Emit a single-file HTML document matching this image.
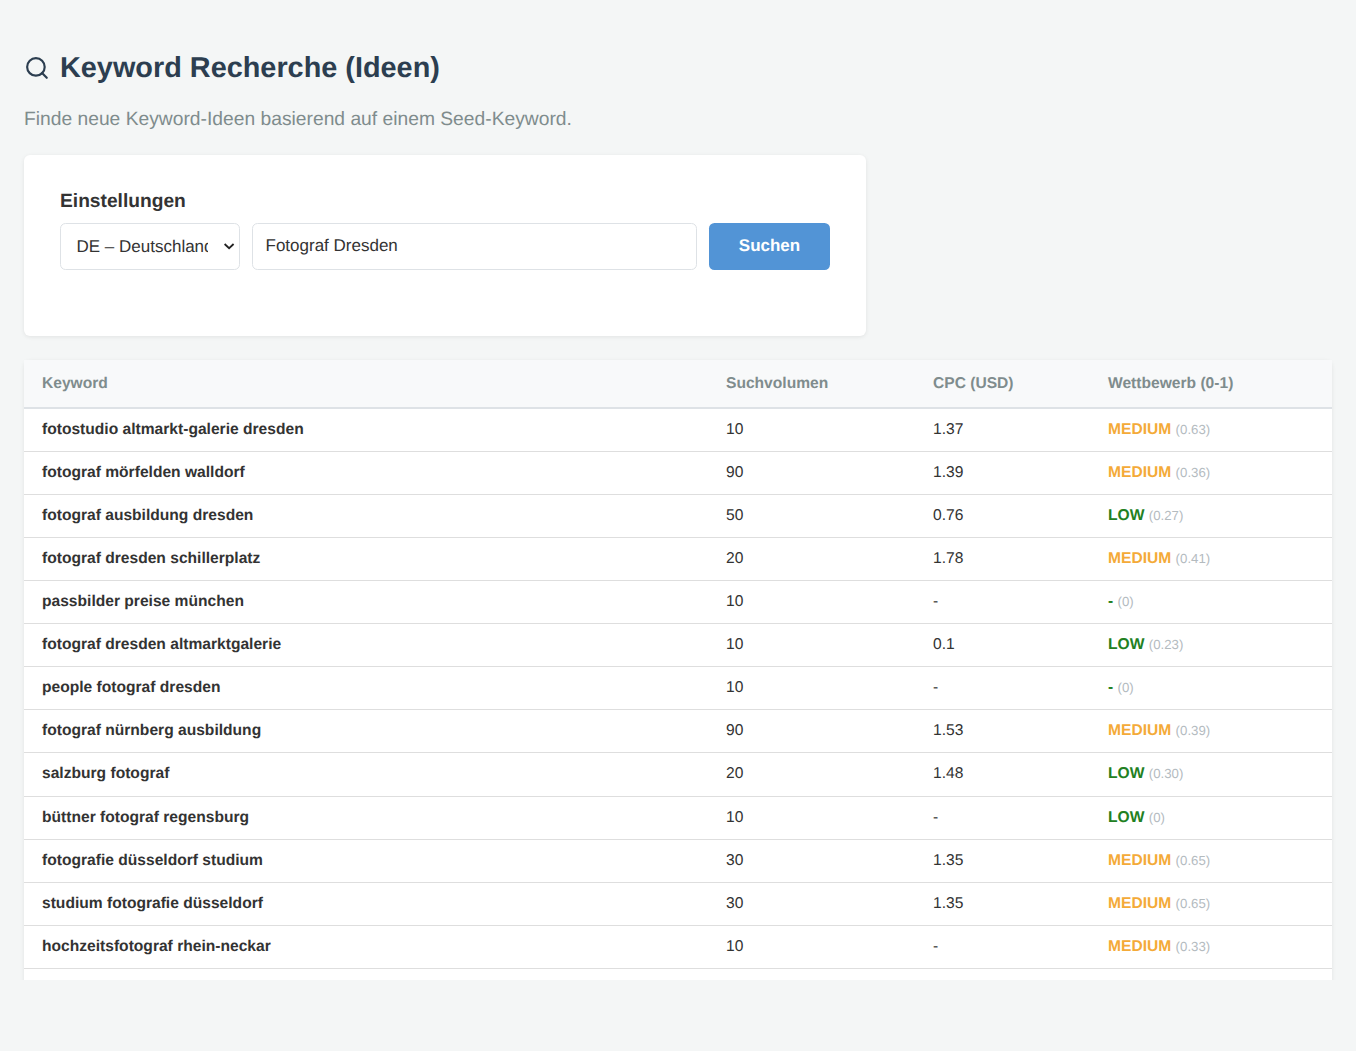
<!DOCTYPE html>
<html><head><meta charset="utf-8">
<style>
*{box-sizing:border-box;margin:0;padding:0}
html,body{width:1356px;height:1051px;overflow:hidden}
body{background:#f4f6f6;font-family:"Liberation Sans",sans-serif;color:#333;position:relative;text-rendering:geometricPrecision}
.clip{position:absolute;left:0;top:0;width:1356px;height:980px;overflow:hidden}
.title{position:absolute;left:24px;top:48px;height:40px;display:flex;align-items:center;font-size:28.85px;font-weight:bold;color:#2c3e50;white-space:nowrap}
.title svg{width:26px;height:26px;margin-right:10px}
.sub{position:absolute;left:24px;top:108.5px;font-size:19.25px;color:#7f8c8d;white-space:nowrap}
.card{position:absolute;left:24px;top:155px;width:842px;height:181px;background:#fff;border-radius:6px;box-shadow:0 1px 4px rgba(0,0,0,.08)}
.card h3{position:absolute;left:36px;top:36px;font-size:19.2px;font-weight:bold;color:#333;white-space:nowrap}
.sel{position:absolute;left:36px;top:68px;width:180px;height:47px;border:1px solid #dee2e6;border-radius:5.5px;background:#fff;overflow:hidden}
.sel span{position:absolute;left:15.5px;top:13px;font-size:17px;color:#333;white-space:nowrap;width:131.5px;overflow:hidden}
.sel svg{position:absolute;left:163px;top:19px}
.inp{position:absolute;left:228px;top:68px;width:445px;height:47px;border:1px solid #dee2e6;border-radius:5.5px;background:#fff}
.inp span{position:absolute;left:12.5px;top:12px;font-size:17px;color:#333;white-space:nowrap}
.btn{position:absolute;left:685px;top:68px;width:121px;height:47px;border-radius:5.5px;background:#5294d6;color:#fff;font-weight:bold;font-size:17px;text-align:center;line-height:45px}
.tbl{position:absolute;left:24px;top:360px;width:1308px;height:700px;background:#fff;border-radius:6px;box-shadow:0 1px 4px rgba(0,0,0,.08)}
.hd{position:absolute;left:0;top:0;width:1308px;height:49px;background:#f8f9fa;border-bottom:2px solid #dee2e6}
.hd span{position:absolute;top:15px;font-size:15.6px;font-weight:bold;color:#7f8c8d;white-space:nowrap;line-height:18px}
.r{position:absolute;left:0;width:1308px;border-bottom:1px solid #dedede}
.r span{position:absolute;top:12px;font-size:15.6px;color:#333;white-space:nowrap;line-height:18px}
.r span.k{font-weight:bold}
b.m{color:#f4aa38}
b.l{color:#228022}
b.d{color:#228022}
i{font-style:normal;color:#b4bbbf;font-size:13.26px}
</style></head><body>
<div class="clip">
<div class="title"><svg viewBox="0 0 24 24" fill="none" stroke="#2c3e50" stroke-width="2" stroke-linecap="round"><circle cx="11" cy="11" r="8.1"/><path d="M21 21l-4.35-4.35"/></svg>Keyword Recherche (Ideen)</div>
<div class="sub">Finde neue Keyword-Ideen basierend auf einem Seed-Keyword.</div>
<div class="card">
<h3>Einstellungen</h3>
<div class="sel"><span>DE – Deutschland</span><svg width="12" height="8" viewBox="0 0 12 8"><path d="M0.6 1l4.5 4.2 4.5-4.2" stroke="#222" stroke-width="1.8" fill="none"/></svg></div>
<div class="inp"><span>Fotograf Dresden</span></div>
<div class="btn">Suchen</div>
</div>
<div class="tbl">
<div class="hd"><span style="left:18px">Keyword</span><span style="left:702px">Suchvolumen</span><span style="left:909px">CPC (USD)</span><span style="left:1084px">Wettbewerb (0-1)</span></div>
<div class="r" style="top:49px;height:43px"><span class="k" style="left:18px">fotostudio altmarkt-galerie dresden</span><span style="left:702px">10</span><span style="left:909px">1.37</span><span style="left:1084px"><b class="m">MEDIUM</b> <i>(0.63)</i></span></div>
<div class="r" style="top:92px;height:43px"><span class="k" style="left:18px">fotograf mörfelden walldorf</span><span style="left:702px">90</span><span style="left:909px">1.39</span><span style="left:1084px"><b class="m">MEDIUM</b> <i>(0.36)</i></span></div>
<div class="r" style="top:135px;height:43px"><span class="k" style="left:18px">fotograf ausbildung dresden</span><span style="left:702px">50</span><span style="left:909px">0.76</span><span style="left:1084px"><b class="l">LOW</b> <i>(0.27)</i></span></div>
<div class="r" style="top:178px;height:43px"><span class="k" style="left:18px">fotograf dresden schillerplatz</span><span style="left:702px">20</span><span style="left:909px">1.78</span><span style="left:1084px"><b class="m">MEDIUM</b> <i>(0.41)</i></span></div>
<div class="r" style="top:221px;height:43px"><span class="k" style="left:18px">passbilder preise münchen</span><span style="left:702px">10</span><span style="left:909px">-</span><span style="left:1084px"><b class="d">-</b> <i>(0)</i></span></div>
<div class="r" style="top:264px;height:43px"><span class="k" style="left:18px">fotograf dresden altmarktgalerie</span><span style="left:702px">10</span><span style="left:909px">0.1</span><span style="left:1084px"><b class="l">LOW</b> <i>(0.23)</i></span></div>
<div class="r" style="top:307px;height:43px"><span class="k" style="left:18px">people fotograf dresden</span><span style="left:702px">10</span><span style="left:909px">-</span><span style="left:1084px"><b class="d">-</b> <i>(0)</i></span></div>
<div class="r" style="top:350px;height:43px"><span class="k" style="left:18px">fotograf nürnberg ausbildung</span><span style="left:702px">90</span><span style="left:909px">1.53</span><span style="left:1084px"><b class="m">MEDIUM</b> <i>(0.39)</i></span></div>
<div class="r" style="top:393px;height:44px"><span class="k" style="left:18px">salzburg fotograf</span><span style="left:702px">20</span><span style="left:909px">1.48</span><span style="left:1084px"><b class="l">LOW</b> <i>(0.30)</i></span></div>
<div class="r" style="top:437px;height:43px"><span class="k" style="left:18px">büttner fotograf regensburg</span><span style="left:702px">10</span><span style="left:909px">-</span><span style="left:1084px"><b class="l">LOW</b> <i>(0)</i></span></div>
<div class="r" style="top:480px;height:43px"><span class="k" style="left:18px">fotografie düsseldorf studium</span><span style="left:702px">30</span><span style="left:909px">1.35</span><span style="left:1084px"><b class="m">MEDIUM</b> <i>(0.65)</i></span></div>
<div class="r" style="top:523px;height:43px"><span class="k" style="left:18px">studium fotografie düsseldorf</span><span style="left:702px">30</span><span style="left:909px">1.35</span><span style="left:1084px"><b class="m">MEDIUM</b> <i>(0.65)</i></span></div>
<div class="r" style="top:566px;height:43px"><span class="k" style="left:18px">hochzeitsfotograf rhein-neckar</span><span style="left:702px">10</span><span style="left:909px">-</span><span style="left:1084px"><b class="m">MEDIUM</b> <i>(0.33)</i></span></div>
<div class="r" style="top:609px;height:43px"></div>
</div>
</div>
</body></html>
